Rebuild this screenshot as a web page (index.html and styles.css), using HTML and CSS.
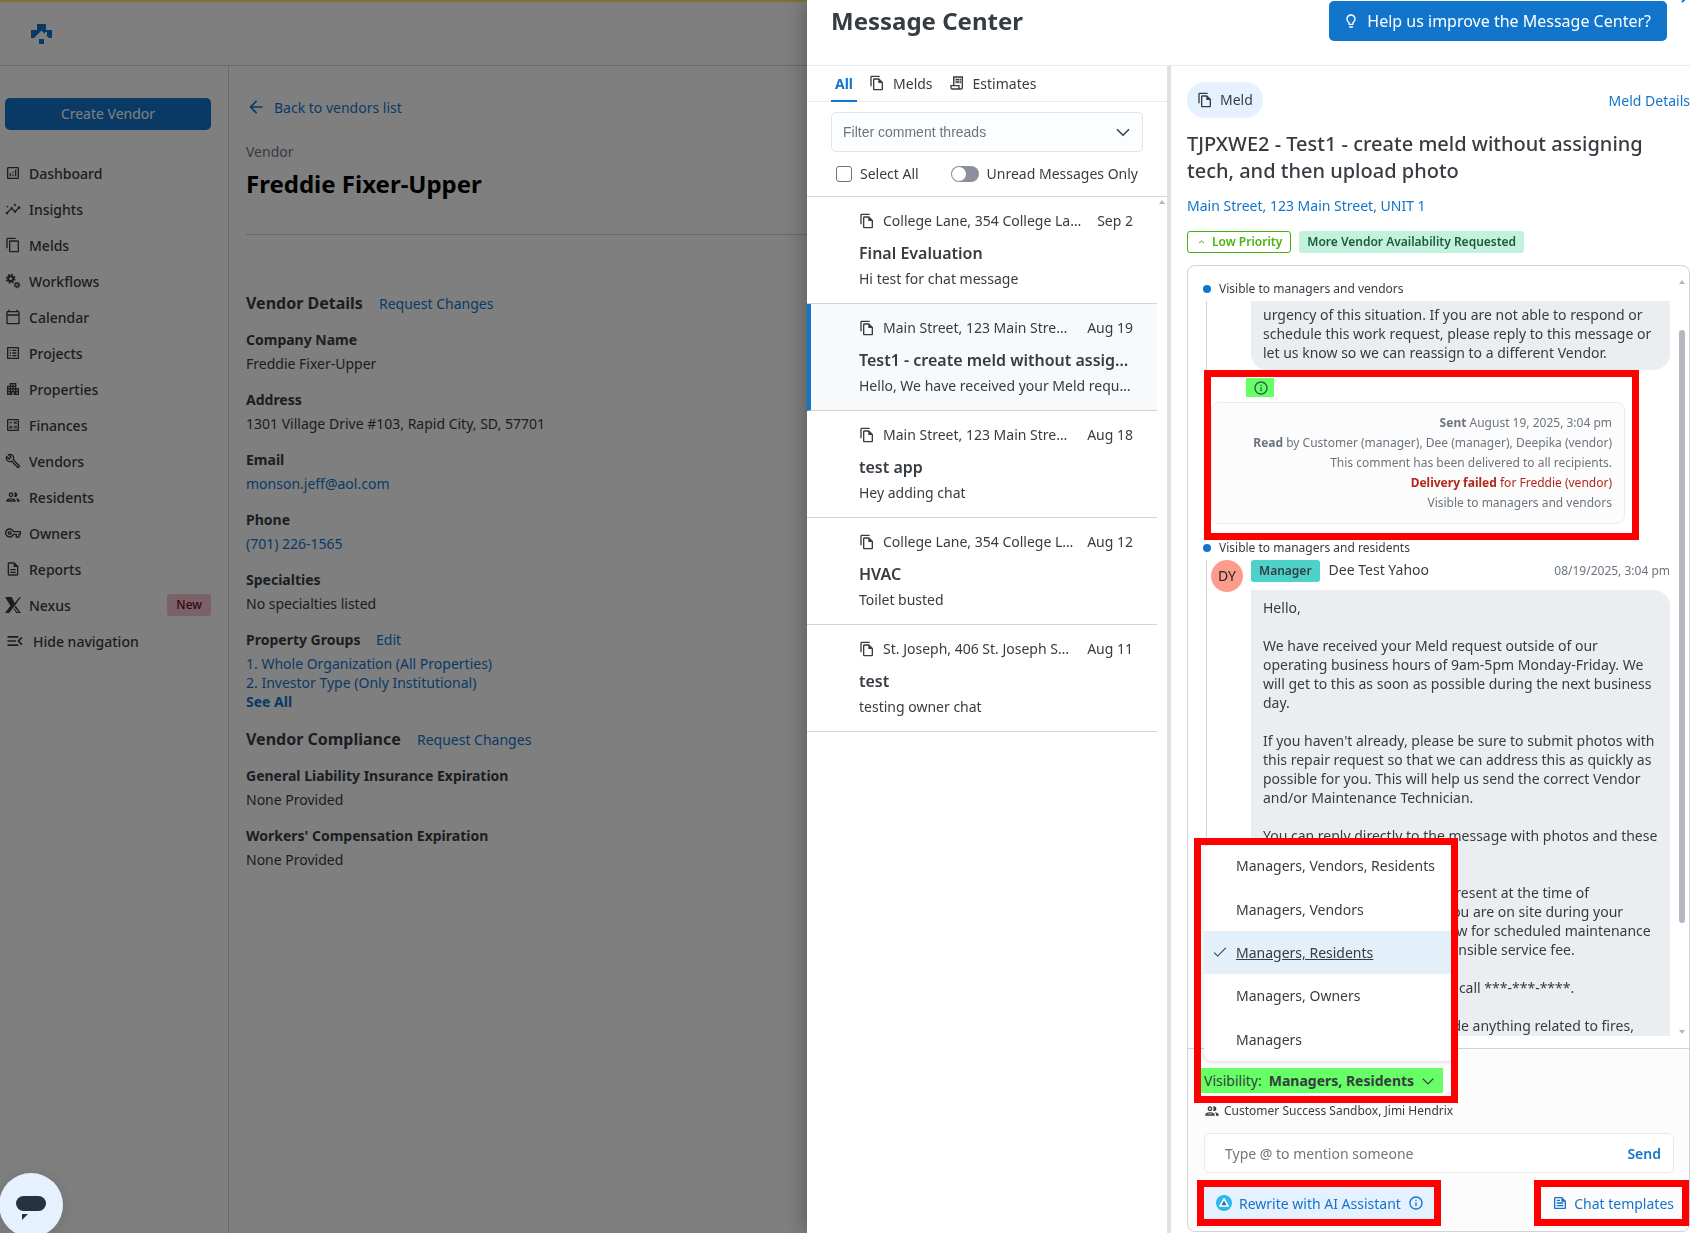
FILE: index.html
```html
<!DOCTYPE html>
<html lang="en">
	<head>
		<meta charset="utf-8">
		<title>Message Center</title>
		<link rel="stylesheet" href="styles.css">
	</head>
	<body>
		<!-- shared icons -->
		<svg class="sprite" aria-hidden="true">
			<symbol id="i-dashboard" viewBox="0 0 24 24"><path d="M19 3H5c-1.1 0-2 .9-2 2v14c0 1.1.9 2 2 2h14c1.1 0 2-.9 2-2V5c0-1.1-.9-2-2-2zm0 16H5V5h14v14zM7 12h2v5H7zm8-5h2v10h-2zm-4 7h2v3h-2zm0-4h2v2h-2z"/></symbol>
			<symbol id="i-insights" viewBox="0 0 24 24"><path d="M21 8c-1.45 0-2.26 1.44-1.93 2.51l-3.55 3.56c-.3-.09-.74-.09-1.04 0l-2.55-2.55C12.27 10.45 11.46 9 10 9c-1.45 0-2.27 1.44-1.93 2.52l-4.56 4.55C2.44 15.74 1 16.55 1 18c0 1.1.9 2 2 2 1.45 0 2.26-1.44 1.93-2.51l4.55-4.56c.3.09.74.09 1.04 0l2.55 2.55C12.73 16.55 13.54 18 15 18c1.45 0 2.27-1.44 1.93-2.52l3.56-3.55C21.56 12.26 23 11.45 23 10c0-1.1-.9-2-2-2zM15 9l.94-2.07L18 6l-2.06-.93L15 3l-.92 2.07L12 6l2.08.93zM3.5 11L4 9l2-.5L4 8l-.5-2L3 8l-2 .5L3 9z"/></symbol>
			<symbol id="i-copy" viewBox="0 0 24 24"><path d="M16 1H4c-1.1 0-2 .9-2 2v14h2V3h12V1zm3 4H8c-1.1 0-2 .9-2 2v14c0 1.1.9 2 2 2h11c1.1 0 2-.9 2-2V7c0-1.1-.9-2-2-2zm0 16H8V7h11v14z"/></symbol>
			<symbol id="i-meld" viewBox="0 0 24 24"><path d="M16 1H4c-1.1 0-2 .9-2 2v14h2V3h12V1zm-1 4H8c-1.1 0-1.99.9-1.99 2L6 21c0 1.1.89 2 1.99 2H19c1.1 0 2-.9 2-2V11l-6-6zM8 21V7h6v5h5v9H8z"/></symbol>
			<symbol id="i-gears" viewBox="0 0 24 24"><g fill="none" stroke="currentColor"><circle cx="8.500" cy="8.500" r="3.700" stroke-width="3"/><circle cx="8.500" cy="8.500" r="6" stroke-width="2.600" stroke-dasharray="2.700 2.010"/><circle cx="18" cy="18" r="2.300" stroke-width="1.800"/><circle cx="18" cy="18" r="4" stroke-width="2" stroke-dasharray="1.800 1.340"/></g></symbol>
			<symbol id="i-calendar" viewBox="0 0 24 24"><path d="M20 3h-1V1h-2v2H7V1H5v2H4c-1.1 0-2 .9-2 2v16c0 1.1.9 2 2 2h16c1.1 0 2-.9 2-2V5c0-1.1-.9-2-2-2zm0 18H4V10h16v11zm0-13H4V5h16v3z"/></symbol>
			<symbol id="i-list" viewBox="0 0 24 24"><path d="M19 5v14H5V5h14m1.100-2H3.900c-.5 0-.9.4-.9.9v16.200c0 .4.4.9.9.9h16.200c.4 0 .9-.5.9-.9V3.900c0-.5-.5-.9-.9-.9zM11 7h6v2h-6V7zm0 4h6v2h-6v-2zm0 4h6v2h-6v-2zM7 7h2v2H7zm0 4h2v2H7zm0 4h2v2H7z"/></symbol>
			<symbol id="i-building" viewBox="0 0 24 24"><path d="M17 11V3H7v4H3v14h8v-4h2v4h8V11h-4zM7 19H5v-2h2v2zm0-4H5v-2h2v2zm0-4H5V9h2v2zm4 4H9v-2h2v2zm0-4H9V9h2v2zm0-4H9V5h2v2zm4 8h-2v-2h2v2zm0-4h-2V9h2v2zm0-4h-2V5h2v2zm4 12h-2v-2h2v2zm0-4h-2v-2h2v2z"/></symbol>
			<symbol id="i-calc" viewBox="0 0 24 24"><path d="M19 3H5c-1.100 0-2 .9-2 2v14c0 1.100.9 2 2 2h14c1.100 0 2-.9 2-2V5c0-1.100-.9-2-2-2zm0 16H5V5h14v14z"/><path d="M6.200 7.700h5v1.500h-5zM13 15.700h5v1.500h-5zM13 13.200h5v1.500h-5zM8 18h1.500v-2h2v-1.500h-2v-2H8v2H6V16h2z"/><path d="M14.100 10.900l1.400-1.400 1.400 1.400 1.100-1-1.400-1.400L18 7l-1.100-1-1.400 1.400L14.100 6 13 7l1.400 1.500L13 9.900z"/></symbol>
			<symbol id="i-wrench" viewBox="0 0 24 24"><path d="M22.610 18.990l-9.080-9.080c.93-2.340.45-5.100-1.440-7C9.790.61 6.210.4 3.660 2.260L7.500 6.110 6.080 7.520 2.250 3.690C.39 6.230.6 9.820 2.900 12.110c1.860 1.860 4.570 2.350 6.890 1.480l9.110 9.110c.39.39 1.020.39 1.410 0l2.300-2.300c.4-.38.4-1.010 0-1.410zm-3 1.600l-9.460-9.460c-.61.45-1.290.72-2 .82-1.360.2-2.790-.21-3.830-1.250C3.370 9.760 2.930 8.500 3 7.260l3.090 3.090 4.240-4.240-3.090-3.090c1.240-.07 2.490.37 3.440 1.310 1.080 1.080 1.490 2.570 1.240 3.960-.12.71-.42 1.370-.88 1.960l9.450 9.450-.88.89z"/></symbol>
			<symbol id="i-people" viewBox="0 0 24 24"><path d="M9 13.750c-2.340 0-7 1.170-7 3.500V19h14v-1.750c0-2.330-4.660-3.500-7-3.500zM4.340 17c.84-.58 2.870-1.250 4.660-1.250s3.820.67 4.660 1.250H4.340zM9 12c1.930 0 3.500-1.570 3.500-3.500S10.930 5 9 5 5.500 6.570 5.500 8.500 7.070 12 9 12zm0-5c.83 0 1.500.67 1.500 1.500S9.830 10 9 10s-1.500-.67-1.500-1.500S8.170 7 9 7zm7.040 6.810c1.160.84 1.960 1.960 1.960 3.440V19h4v-1.750c0-2.020-3.500-3.170-5.960-3.440zM15 12c1.930 0 3.500-1.570 3.500-3.500S16.930 5 15 5c-.54 0-1.040.13-1.500.35.63.89 1 1.980 1 3.150s-.37 2.260-1 3.150c.46.22.96.35 1.500.35z"/></symbol>
			<symbol id="i-key" viewBox="0 0 24 24"><path d="M22 19h-6v-4h-2.680c-1.140 2.420-3.600 4-6.320 4-3.860 0-7-3.140-7-7s3.140-7 7-7c2.720 0 5.170 1.580 6.320 4H24v6h-2v4zm-4-2h2v-4h2v-2H11.940l-.23-.67C11.010 8.340 9.110 7 7 7c-2.760 0-5 2.240-5 5s2.240 5 5 5c2.110 0 4.010-1.340 4.710-3.330l.23-.67H18v4zM7 15c-1.650 0-3-1.350-3-3s1.350-3 3-3 3 1.350 3 3-1.350 3-3 3zm0-4c-.55 0-1 .45-1 1s.45 1 1 1 1-.45 1-1-.45-1-1-1z"/></symbol>
			<symbol id="i-doc" viewBox="0 0 24 24"><path d="M8 16h8v2H8zm0-4h8v2H8zm6-10H6c-1.100 0-2 .9-2 2v16c0 1.100.89 2 1.990 2H18c1.100 0 2-.9 2-2V8l-6-6zm4 18H6V4h7v5h5v11z"/></symbol>
			<symbol id="i-nexus" viewBox="0 0 24 24"><path d="M0 0h10l4.500 9L22 0h2l-8.500 12L10 19l-4 5H0l8-11z"/><path d="M14 15l2-2 8 11h-7l-4-6 1-1 4 5.500h2.500z"/></symbol>
			<symbol id="i-menu-open" viewBox="0 0 24 24"><path d="M3 18h13v-2H3v2zm0-5h10v-2H3v2zm0-7v2h13V6H3zm18 9.590L17.420 12 21 8.410 19.590 7l-5 5 5 5L21 15.590z"/></symbol>
			<symbol id="i-back" viewBox="0 0 24 24"><path d="M20 11H7.830l5.590-5.590L12 4l-8 8 8 8 1.410-1.410L7.830 13H20v-2z"/></symbol>
			<symbol id="i-receipt" viewBox="0 0 24 24"><path d="M6 2h15v17c0 1.700-1.300 3-3 3H5c-1.700 0-3-1.300-3-3v-4h4V2zm2 2v11h8v4c0 .6.400 1 1 1h1c.6 0 1-.4 1-1V4H8zM4 17v2c0 .6.400 1 1 1h9v-3H4zM10 6h5v2h-5zM16 6h2v2h-2zM10 9.500h5v2h-5zM16 9.500h2v2h-2z" fill-rule="evenodd"/><path d="M8 4h11v9H8z" opacity=".25"/></symbol>
			<symbol id="i-bulb" viewBox="0 0 24 24"><path d="M9 21c0 .5.4 1 1 1h4c.6 0 1-.5 1-1v-1H9v1zm3-19C8.100 2 5 5.100 5 9c0 2.400 1.200 4.500 3 5.700V17c0 .5.4 1 1 1h6c.6 0 1-.5 1-1v-2.300c1.800-1.300 3-3.400 3-5.700 0-3.900-3.100-7-7-7zm2.900 11.100l-.9.6V16h-4v-2.300l-.9-.6C7.800 12.200 7 10.600 7 9c0-2.800 2.200-5 5-5s5 2.200 5 5c0 1.600-.8 3.200-2.100 4.100z"/></symbol>
			<symbol id="i-info" viewBox="0 0 24 24"><path d="M11 7h2v2h-2zm0 4h2v6h-2zm1-9C6.480 2 2 6.480 2 12s4.480 10 10 10 10-4.480 10-10S17.520 2 12 2zm0 18c-4.410 0-8-3.590-8-8s3.590-8 8-8 8 3.590 8 8-3.590 8-8 8z"/></symbol>
			<symbol id="i-template" viewBox="0 0 24 24"><path d="M15 3H5c-1.100 0-2 .9-2 2v14c0 1.100.9 2 2 2h14c1.100 0 2-.9 2-2V9l-6-6zM5 19V5h9v5h5v9H5zM7 7h5v2H7zm0 4h10v2H7zm0 4h10v2H7z"/></symbol>
			<symbol id="i-chevron" viewBox="0 0 24 24"><path d="M3 8l9 9 9-9" fill="none" stroke="currentColor" stroke-width="2.200"/></symbol>
			<symbol id="i-check" viewBox="0 0 24 24"><path d="M2 13l6 6L22 5" fill="none" stroke="currentColor" stroke-width="1.800"/></symbol>
		</svg>

		<div class="app">
			<header class="topbar">
				<a href="#" class="logo" aria-label="Home">
					<svg width="21" height="21" viewBox="0 0 21 21"><path d="M6 0h9v6h6v8h-3l-7.500-7.500L3 14H0V6h6z"/><path d="M14 8h2v3h-2z" fill="#fff"/><path d="M8 15h5v5H8z"/></svg>
				</a>
			</header>
			<div class="app-body">
				<nav class="sidebar">
					<button type="button" class="create">Create Vendor</button>
					<ul>
						<li><a href="#"><svg class="icon"><use href="#i-dashboard"/></svg>Dashboard</a></li>
						<li><a href="#"><svg class="icon"><use href="#i-insights"/></svg>Insights</a></li>
						<li><a href="#"><svg class="icon"><use href="#i-copy"/></svg>Melds</a></li>
						<li><a href="#"><svg class="icon"><use href="#i-gears"/></svg>Workflows</a></li>
						<li><a href="#"><svg class="icon"><use href="#i-calendar"/></svg>Calendar</a></li>
						<li><a href="#"><svg class="icon"><use href="#i-list"/></svg>Projects</a></li>
						<li><a href="#"><svg class="icon"><use href="#i-building"/></svg>Properties</a></li>
						<li><a href="#"><svg class="icon"><use href="#i-calc"/></svg>Finances</a></li>
						<li><a href="#"><svg class="icon"><use href="#i-wrench"/></svg>Vendors</a></li>
						<li><a href="#"><svg class="icon"><use href="#i-people"/></svg>Residents</a></li>
						<li><a href="#"><svg class="icon"><use href="#i-key"/></svg>Owners</a></li>
						<li><a href="#"><svg class="icon"><use href="#i-doc"/></svg>Reports</a></li>
						<li><a href="#"><svg class="icon"><use href="#i-nexus"/></svg>Nexus<span class="new">New</span></a></li>
						<li><a href="#" class="hide-nav"><svg class="icon icon-lg"><use href="#i-menu-open"/></svg>Hide navigation</a></li>
					</ul>
				</nav>
				<main class="vendor">
					<a href="#" class="back"><svg class="icon icon-lg"><use href="#i-back"/></svg>Back to vendors list</a>
					<p class="kind">Vendor</p>
					<h1>Freddie Fixer-Upper</h1>
					<section>
						<h2>Vendor Details <a href="#">Request Changes</a></h2>
						<dl>
							<dt>Company Name</dt>
							<dd>Freddie Fixer-Upper</dd>
							<dt>Address</dt>
							<dd>1301 Village Drive #103, Rapid City, SD, 57701</dd>
							<dt>Email</dt>
							<dd><a href="#">monson.jeff@aol.com</a></dd>
							<dt>Phone</dt>
							<dd><a href="#">(701) 226-1565</a></dd>
							<dt>Specialties</dt>
							<dd>No specialties listed</dd>
							<dt>Property Groups <a href="#">Edit</a></dt>
							<dd>
								<a href="#">1. Whole Organization (All Properties)</a><br>
								<a href="#">2. Investor Type (Only Institutional)</a><br>
								<a href="#" class="all">See All</a>
							</dd>
						</dl>
					</section>
					<section>
						<h2>Vendor Compliance <a href="#">Request Changes</a></h2>
						<dl>
							<dt>General Liability Insurance Expiration</dt>
							<dd>None Provided</dd>
							<dt>Workers' Compensation Expiration</dt>
							<dd>None Provided</dd>
						</dl>
					</section>
				</main>
			</div>
		</div>

		<div class="backdrop"></div>

		<aside class="drawer">
			<header class="drawer-head">
				<h2>Message Center</h2>
				<button type="button" class="help"><svg class="icon"><use href="#i-bulb"/></svg>Help us improve the Message Center?</button>
				<button type="button" class="close" aria-label="Close"><svg width="16" height="16" viewBox="0 0 16 16"><path d="M2 2l12 12M14 2L2 14"/></svg></button>
			</header>
			<div class="drawer-body">
				<section class="threads">
					<div class="tabs">
						<button type="button" class="tab current">All</button>
						<button type="button" class="tab"><svg class="icon"><use href="#i-meld"/></svg>Melds</button>
						<button type="button" class="tab"><svg class="icon"><use href="#i-receipt"/></svg>Estimates</button>
					</div>
					<div class="filters">
						<div class="select">
							<select aria-label="Filter comment threads">
								<option>Filter comment threads</option>
							</select>
							<svg class="icon"><use href="#i-chevron"/></svg>
						</div>
						<div class="checks">
							<label><input type="checkbox" class="box">Select All</label>
							<label><input type="checkbox" class="toggle" role="switch">Unread Messages Only</label>
						</div>
					</div>
					<div class="list">
						<ul>
							<li>
								<div class="meta"><svg class="icon"><use href="#i-meld"/></svg><span class="place">College Lane, 354 College Lane</span><time>Sep 2</time></div>
								<h3>Final Evaluation</h3>
								<p>Hi test for chat message</p>
							</li>
							<li class="current">
								<div class="meta"><svg class="icon"><use href="#i-meld"/></svg><span class="place">Main Street, 123 Main Street, UNIT 1</span><time>Aug 19</time></div>
								<h3>Test1 - create meld without assigning tech</h3>
								<p>Hello, We have received your Meld request outside</p>
							</li>
							<li>
								<div class="meta"><svg class="icon"><use href="#i-meld"/></svg><span class="place">Main Street, 123 Main Street, UNIT 1</span><time>Aug 18</time></div>
								<h3>test app</h3>
								<p>Hey adding chat</p>
							</li>
							<li>
								<div class="meta"><svg class="icon"><use href="#i-meld"/></svg><span class="place">College Lane, 354 College Lane</span><time>Aug 12</time></div>
								<h3>HVAC</h3>
								<p>Toilet busted</p>
							</li>
							<li>
								<div class="meta"><svg class="icon"><use href="#i-meld"/></svg><span class="place">St. Joseph, 406 St. Joseph Square</span><time>Aug 11</time></div>
								<h3>test</h3>
								<p>testing owner chat</p>
							</li>
						</ul>
						<span class="arrow-up"></span>
					</div>
				</section>

				<section class="chat">
					<div class="chat-top">
						<span class="pill"><svg class="icon"><use href="#i-meld"/></svg>Meld</span>
						<a href="#">Meld Details</a>
					</div>
					<h3>TJPXWE2 - Test1 - create meld without assigning tech, and then upload photo</h3>
					<a href="#" class="address">Main Street, 123 Main Street, UNIT 1</a>
					<div class="tags">
						<span class="tag low"><svg width="5" height="4" viewBox="0 0 5 4"><path d="M0 3l2.500-2L5 3"/></svg>Low Priority</span>
						<span class="tag status">More Vendor Availability Requested</span>
					</div>

					<div class="card">
						<p class="visible">Visible to managers and vendors</p>
						<div class="messages">
							<div class="group">
								<div class="bubble tail-end">urgency of this situation. If you are not able to respond or schedule this work request, please reply to this message or let us know so we can reassign to a different Vendor.</div>
								<button type="button" class="details" aria-label="Delivery details"><svg class="icon"><use href="#i-info"/></svg></button>
								<div class="receipt">
									<p><b>Sent</b> August 19, 2025, 3:04 pm</p>
									<p><b>Read</b> by Customer (manager), Dee (manager), Deepika (vendor)</p>
									<p>This comment has been delivered to all recipients.</p>
									<p class="failed"><b>Delivery failed</b> for Freddie (vendor)</p>
									<p>Visible to managers and vendors</p>
								</div>
								<span class="mark mark-receipt"></span>
							</div>
							<p class="visible">Visible to managers and residents</p>
							<div class="group message">
								<span class="avatar">DY</span>
								<div class="content">
									<div class="author">
										<span class="role">Manager</span>
										<span>Dee Test Yahoo</span>
										<time>08/19/2025, 3:04 pm</time>
									</div>
									<div class="bubble">
										<p>Hello,</p>
										<p>We have received your Meld request outside of our operating business hours of 9am-5pm Monday-Friday. We will get to this as soon as possible during the next business day.</p>
										<p>If you haven't already, please be sure to submit photos with this repair request so that we can address this as quickly as possible for you. This will help us send the correct Vendor and/or Maintenance Technician.</p>
										<p>You can reply directly to the message with photos and these details.</p>
										<p>Please note you must all be present at the time of<br>service. Please also be sure you are on site during your<br>allotted vendor service window for scheduled maintenance<br>or there will be a renter responsible service fee.</p>
										<p>During an emergency, please call ***-***-****.</p>
										<p>Emergencies could also include anything related to fires,</p>
									</div>
								</div>
							</div>
						</div>
						<div class="scrollbar"><span class="arrow-up"></span><span class="thumb"></span><span class="arrow-down"></span></div>

						<form class="composer">
							<div class="visibility">
								<button type="button" class="visibility-btn">Visibility: <b>Managers, Residents</b><svg class="icon"><use href="#i-chevron"/></svg></button>
								<div class="menu">
									<button type="button">Managers, Vendors, Residents</button>
									<button type="button">Managers, Vendors</button>
									<button type="button" class="current"><svg class="icon"><use href="#i-check"/></svg><span>Managers, Residents</span></button>
									<button type="button">Managers, Owners</button>
									<button type="button">Managers</button>
								</div>
								<span class="mark mark-visibility"></span>
							</div>
							<p class="members"><svg class="icon"><use href="#i-people"/></svg>Customer Success Sandbox, Jimi Hendrix</p>
							<div class="field">
								<input type="text" placeholder="Type @ to mention someone" aria-label="Message">
								<button type="submit">Send</button>
							</div>
							<div class="tools">
								<button type="button" class="rewrite">
									<svg width="16" height="16" viewBox="0 0 16 16"><circle cx="8" cy="8" r="8" fill="#2bb9ee"/><path d="M8 3.800l4 7.200H4z" fill="#2a6f9e" stroke="#fff" stroke-width="1.600" stroke-linejoin="round"/></svg>
									Rewrite with AI Assistant
									<svg class="icon"><use href="#i-info"/></svg>
									<span class="mark mark-tool"></span>
								</button>
								<button type="button" class="templates"><svg class="icon"><use href="#i-template"/></svg>Chat templates<span class="mark mark-templates"></span></button>
							</div>
						</form>
					</div>
				</section>
			</div>
		</aside>

		<button type="button" class="launcher" aria-label="Open chat">
			<svg width="64" height="64" viewBox="0 0 64 64"><rect x="17" y="23" width="30" height="15" rx="7.500"/><path d="M23 41h6l-6 6z"/></svg>
		</button>
	</body>
</html>
```

FILE: styles.css
```css
* {
	box-sizing: border-box;
	margin: 0;
	padding: 0;
}
html, body {
	height: 100%;
	overflow: hidden;
}
body {
	font-family: "Noto Sans", sans-serif;
	font-size: 14px;
	line-height: 19px;
	color: #373c42;
	background: #fff;
}
ul {
	list-style: none;
}
a {
	color: #1275cc;
	text-decoration: none;
}
button {
	font: inherit;
	color: inherit;
	border: 0;
	background: none;
}
.sprite {
	display: none;
}
.icon {
	width: 16px;
	height: 16px;
	flex: none;
	fill: currentColor;
}
.icon-lg {
	width: 20px;
	height: 20px;
}

/* page behind the drawer */
.app {
	display: flex;
	flex-direction: column;
	height: 100%;
	border-top: 2px solid #ffe45c;
}
.topbar {
	height: 64px;
	padding: 22px 31px;
	border-bottom: 1px solid #ced4da;
}
.logo {
	fill: #1275cc;
}
.logo svg {
	display: block;
}
.app-body {
	display: flex;
	flex: 1;
}
.sidebar {
	width: 229px;
	padding: 32px 17px 0 5px;
	border-right: 1px solid #ced4da;
}
.create {
	width: 100%;
	height: 32px;
	margin-bottom: 25px;
	padding-bottom: 2px;
	border-radius: 5px;
	color: #fff;
	background: #1275cc;
}
.sidebar a {
	display: flex;
	align-items: center;
	gap: 8px;
	height: 36px;
	font-weight: 500;
	color: #373c42;
}
.new {
	margin-left: auto;
	padding: 0 9px;
	border-radius: 3px;
	font-size: 12px;
	line-height: 22px;
	color: #6b0a26;
	background: #f7c4d2;
}
.vendor {
	flex: 1;
	padding: 31px 0 0 17px;
}
.back {
	display: flex;
	align-items: center;
	gap: 8px;
	height: 20px;
}
.kind {
	margin-top: 25px;
	color: #6c757d;
}
h1 {
	padding-bottom: 34px;
	margin: 6px 0 57px;
	border-bottom: 1px solid #ced4da;
	font-size: 24px;
	line-height: 33px;
	font-weight: 700;
	color: #000;
}
.vendor h2 {
	margin-bottom: 15px;
	font-size: 16px;
	line-height: 22px;
	font-weight: 700;
}
.vendor h2 a, dt a {
	margin-left: 12px;
	font-size: 14px;
	font-weight: 400;
}
dt {
	margin-bottom: 5px;
	font-weight: 700;
}
dd {
	margin-bottom: 17px;
}
.all {
	font-weight: 700;
}
.backdrop {
	position: fixed;
	inset: 0;
	background: rgba(0, 0, 0, .5);
}

/* drawer */
.drawer {
	position: fixed;
	inset: 0 0 0 807px;
	display: flex;
	flex-direction: column;
	background: #fff;
	box-shadow: 0 0 24px rgba(0, 0, 0, .35);
}
.drawer-head {
	position: relative;
	display: flex;
	justify-content: space-between;
	height: 66px;
	padding: 1px 23px 0 24px;
	border-bottom: 1px solid #e9ecef;
}
.drawer-head h2 {
	font-size: 24px;
	line-height: 40px;
	font-weight: 700;
}
.help {
	display: flex;
	align-items: center;
	gap: 8px;
	height: 40px;
	padding: 0 16px 0 14px;
	border-radius: 5px;
	font-size: 16px;
	color: #fff;
	background: #1275cc;
}
.close {
	position: absolute;
	top: -12px;
	right: -6px;
	height: 16px;
}
.close path {
	stroke: #1275cc;
	stroke-width: 2;
}
.drawer-body {
	display: flex;
	flex: 1;
	min-height: 0;
}
.threads {
	width: 364px;
	flex: none;
	border-right: 4px solid #dee2e6;
}
.tabs {
	display: flex;
	gap: 12px;
	height: 36px;
	padding-left: 24px;
	border-bottom: 1px solid #e9ecef;
}
.tab {
	display: flex;
	align-items: center;
	gap: 8px;
	height: 36px;
	padding: 0 4px 2px 0;
}
.tab.current {
	padding: 0 4px;
	border-bottom: 2px solid #1275cc;
	font-weight: 700;
	color: #1275cc;
}
.filters {
	padding: 10px 24px 13px;
}
.select {
	display: flex;
	align-items: center;
	height: 40px;
	padding: 0 11px;
	border: 1px solid #dfe3ee;
	border-radius: 5px;
	background: #fcfdff;
}
.select select {
	flex: 1;
	appearance: none;
	border: 0;
	background: none;
	font: 14px "Liberation Sans", sans-serif;
	color: #6c757d;
}
.checks {
	display: flex;
	justify-content: space-between;
	padding: 12px 5px 0;
}
.checks label {
	display: flex;
	align-items: center;
	gap: 8px;
}
.box {
	appearance: none;
	width: 16px;
	height: 16px;
	border: 1px solid #6c757d;
	border-radius: 3px;
}
.toggle {
	appearance: none;
	width: 28px;
	height: 16px;
	padding: 1px;
	border-radius: 8px;
	background: #8c8f9c;
}
.toggle::before {
	content: "";
	display: block;
	width: 14px;
	height: 14px;
	border-radius: 50%;
	background: #fff;
}
.list {
	display: flex;
	border-top: 1px solid #ced4da;
}
.list ul {
	flex: 1;
	min-width: 0;
}
.list li {
	padding: 14px 24px 15px 52px;
	border-bottom: 1px solid #ced4da;
}
.list li.current {
	padding-left: 48px;
	border-left: 4px solid #1275cc;
	background: #f8f9fb;
}
.list h3, .list p, .place {
	overflow: hidden;
	text-overflow: ellipsis;
	white-space: nowrap;
}
.meta {
	display: flex;
	align-items: center;
}
.place {
	flex: 1;
	margin: 0 13px 0 8px;
}
.list h3 {
	margin: 12px 0 5px;
	font-size: 16px;
	line-height: 22px;
	font-weight: 600;
}
.arrow-up, .arrow-down {
	border: 3px solid transparent;
}
.arrow-up {
	border-top: 0;
	border-bottom: 4px solid #b4b7c0;
}
.arrow-down {
	border-bottom: 0;
	border-top: 4px solid #b4b7c0;
}
.list .arrow-up {
	margin: 3px 2px;
	align-self: flex-start;
}

/* conversation */
.chat {
	display: flex;
	flex-direction: column;
	flex: 1;
	min-width: 0;
	padding: 16px 0 1px 16px;
}
.chat-top {
	display: flex;
	align-items: center;
	justify-content: space-between;
	margin-bottom: 12px;
}
.pill {
	display: flex;
	align-items: center;
	gap: 7px;
	height: 36px;
	padding: 0 10px 1px;
	border-radius: 18px;
	background: #e6f1ff;
}
.chat h3 {
	font-size: 20px;
	line-height: 27px;
	font-weight: 500;
}
.address {
	margin: 12px 0 16px;
}
.tags {
	display: flex;
	gap: 8px;
	margin-bottom: 12px;
}
.tag, .role {
	height: 22px;
	padding: 0 8px;
	border-radius: 3px;
	font-size: 12px;
	line-height: 22px;
	font-weight: 600;
}
.low {
	display: flex;
	align-items: center;
	gap: 8px;
	border: 1px solid #49b30e;
	color: #49b30e;
}
.low path {
	fill: none;
	stroke: currentColor;
}
.low svg {
	margin-left: 3px;
}
.status {
	color: #1c5a3c;
	background: #c3f2dc;
}
.card {
	position: relative;
	display: flex;
	flex-direction: column;
	flex: 1;
	min-height: 0;
	border: 1px solid #ced4da;
	border-radius: 8px;
}
.visible {
	display: flex;
	align-items: center;
	gap: 8px;
	height: 20px;
	padding: 0 0 5px 15px;
	font-size: 12px;
	line-height: 15px;
}
.visible::before {
	content: "";
	width: 8px;
	height: 8px;
	border-radius: 50%;
	background: #1275cc;
}
.card > .visible {
	margin-top: 15px;
}
.messages {
	flex: 1;
	min-height: 0;
	margin-bottom: 12px;
	overflow: hidden;
}
.group {
	position: relative;
	margin: 0 19px 0 18px;
	padding: 0 0 16px 4px;
	border-left: 1px solid #ced4da;
}
.bubble {
	padding: 8px 12px 12px;
	border-radius: 0 16px 16px 16px;
	background: #ebeef1;
}
.bubble p {
	margin-bottom: 19px;
}
.tail-end {
	margin-left: 40px;
	padding-top: 4px;
	padding-bottom: 8px;
	border-radius: 0 0 16px 16px;
}
.details {
	display: flex;
	align-items: center;
	justify-content: center;
	width: 28px;
	height: 19px;
	margin: 8px 0 5px 35px;
	padding-left: 2px;
	color: #275f57;
	background: #66ff66;
}
.receipt {
	margin-right: 45px;
	padding: 10px 12px;
	border: 1px solid #e9ecef;
	border-radius: 8px;
	font-size: 12px;
	line-height: 20px;
	text-align: right;
	color: #6c757d;
	background: #fcfcfd;
}
.failed {
	color: #b3261a;
}
b {
	font-weight: 700;
}
.mark {
	position: absolute;
	border: 7px solid #f00;
	pointer-events: none;
}
.mark-receipt {
	inset: 69px 31px 0 -3px;
}
.message {
	display: flex;
	gap: 8px;
}
.avatar {
	flex: none;
	width: 32px;
	height: 32px;
	border-radius: 50%;
	line-height: 32px;
	text-align: center;
	color: #212529;
	background: #fd9b8c;
}
.content {
	flex: 1;
}
.author {
	display: flex;
	gap: 9px;
	margin-bottom: 8px;
}
.role {
	background: #4cd2c8;
}
.author time {
	margin-left: auto;
	font-size: 12px;
	line-height: 22px;
	color: #6c757d;
}
.scrollbar {
	position: absolute;
	top: 14px;
	right: 4px;
	bottom: 197px;
	display: flex;
	flex-direction: column;
	width: 6px;
}
.thumb {
	flex: 1;
	margin: 46px 0 107px;
	border-radius: 3px;
	background: #b4b7c0;
}

/* reply form */
.composer {
	padding: 19px 15px 12px 16px;
	border-top: 1px solid #ced4da;
	border-radius: 0 0 8px 8px;
	background: #fcfcfc;
}
.visibility {
	position: relative;
}
.visibility-btn {
	display: flex;
	align-items: center;
	gap: 7px;
	height: 25px;
	margin-left: -3px;
	padding: 0 8px 0 3px;
	background: #66ff66;
}
.menu {
	position: absolute;
	left: 0;
	bottom: 32px;
	display: grid;
	grid-auto-rows: 1fr;
	width: 251px;
	height: 217px;
	border-radius: 8px;
	background: #fff;
	box-shadow: 0 1px 4px rgba(0, 0, 0, .15);
}
.menu button {
	display: flex;
	align-items: center;
	padding-left: 32px;
}
.menu .current {
	gap: 8px;
	padding-left: 9px;
	text-decoration: underline;
	background: #e3eff9;
}
.menu .icon, .visibility-btn .icon {
	width: 14px;
	height: 14px;
	margin-right: 1px;
}
.visibility-btn .icon {
	margin-right: 0;
}
.mark-visibility {
	left: -10px;
	bottom: -10px;
	width: 264px;
	height: 265px;
}
.members {
	display: flex;
	align-items: center;
	gap: 4px;
	margin: 9px 0 14px;
	font-size: 12px;
	line-height: 17px;
}
.field {
	display: flex;
	height: 40px;
	margin-bottom: 14px;
	padding: 0 12px 0 20px;
	border: 1px solid #e9ecef;
	border-radius: 6px;
	background: #fff;
}
.field input {
	flex: 1;
	border: 0;
	background: none;
	font: inherit;
}
.field input::placeholder {
	color: #757575;
}
.field button {
	font-weight: 600;
	color: #1275cc;
}
.tools {
	display: flex;
	justify-content: space-between;
}
.tools button {
	position: relative;
	display: flex;
	align-items: center;
	gap: 8px;
	height: 32px;
	color: #1275cc;
}
.tools .rewrite {
	gap: 7px;
	padding: 0 10px 0 12px;
	background: #e6f1ff;
}
.tools .templates {
	gap: 6px;
}
.mark-tool {
	inset: -7px;
}
.mark-templates {
	inset: -7px -15px -7px -18px;
}

.launcher {
	position: fixed;
	left: -1px;
	bottom: -4px;
	width: 64px;
	height: 64px;
	border-radius: 50%;
	background: #e6f1ff;
	box-shadow: 0 2px 16px rgba(0, 0, 0, .12);
}
.launcher svg {
	display: block;
	fill: #243242;
}
```
